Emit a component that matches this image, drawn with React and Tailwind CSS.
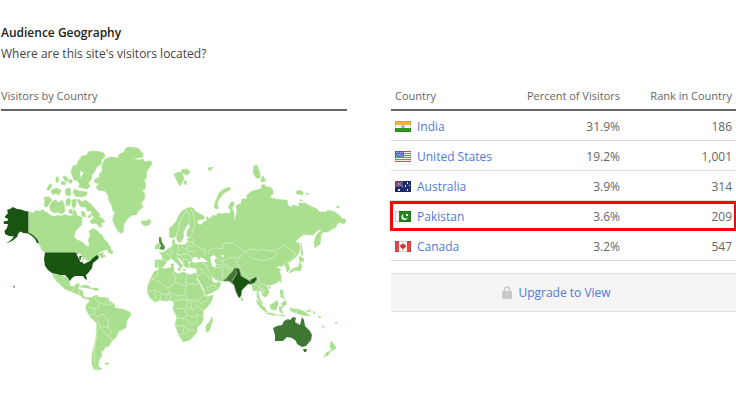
import React from "react";

const countries = [
  { code: "in", name: "India", percent: "31.9%", rank: "186" },
  { code: "us", name: "United States", percent: "19.2%", rank: "1,001" },
  { code: "au", name: "Australia", percent: "3.9%", rank: "314" },
  { code: "pk", name: "Pakistan", percent: "3.6%", rank: "209", marked: true },
  { code: "ca", name: "Canada", percent: "3.2%", rank: "547" },
];

const flags = {
  in: (
    <>
      <path fill="#f5b53d" d="M0 0h16v4H0z" />
      <path fill="#f4f4f4" d="M0 4h16v3H0z" />
      <path fill="#2f9a1f" d="M0 7h16v4H0z" />
      <circle cx="8" cy="5.5" r="1.5" fill="#8d9fd0" />
    </>
  ),
  us: (
    <>
      <path fill="#f6eeee" d="M0 0h16v11H0z" />
      <path stroke="#e0605f" d="M0 .5h16M0 2.5h16M0 4.5h16M0 6.5h16M0 8.5h16M0 10.5h16" />
      <path fill="#4a6fc4" d="M0 0h9v6H0z" />
      <path stroke="#a9bcea" strokeDasharray="1 1" d="M1 1.5h7M2 3.5h6M1 5h7" />
    </>
  ),
  au: (
    <>
      <path fill="#1c2c6c" d="M0 0h16v11H0z" />
      <path stroke="#a9a9c8" d="M0 0l8 6M8 0L0 6" />
      <path stroke="#cf6878" d="M4 0v6M0 3h8" />
      <path fill="#e8ebf8" d="M3 8h2v2H3zM12 1h1v2h-1zM10 4h1v2h-1zM14 4h1v1h-1zM12 8h1v2h-1z" />
    </>
  ),
  pk: (
    <>
      <path fill="#f5f5f5" d="M0 0h4v11H0z" />
      <path fill="#25861d" d="M4 0h12v11H4z" />
      <circle cx="9.5" cy="6" r="3" fill="#fff" />
      <circle cx="10.5" cy="5" r="2.5" fill="#25861d" />
      <path fill="#fff" d="M11 3h2v2h-2z" />
    </>
  ),
  ca: (
    <>
      <path fill="#f7f4f4" d="M0 0h16v11H0z" />
      <path fill="#dc4a48" d="M0 0h4v11H0zM12 0h4v11h-4z" />
      <path fill="#d8302f" d="M8 2l1 1.5 2 .5-.5 2L9 7.5h-.6V9h-.8V7.5H7L5.500 6 5 4l2-.5z" />
    </>
  ),
};

const Flag = ({ code }) => (
  <svg viewBox="0 0 16 11" className="h-[11px] w-4 shrink-0" aria-hidden="true">
    {flags[code]}
    <path fill="none" stroke="#000" strokeOpacity=".12" d="M.5.5h15v10H.5z" />
  </svg>
);

const WorldMap = () => (
  <svg
    viewBox="1 140 346 232"
    className="block w-full"
    role="img"
    aria-label="Visitors by Country"
  >
    <g fill="#abdf90" stroke="#abdf90" strokeWidth=".6" strokeLinejoin="round">
      {/* Canada */}
      <path d="M28.500 211.500L31 212.500L33 213L35 211L38 210.500L40 211.500L42 209.500L45 211.500L48 213L50 215L54 216.500L58 215.500L61 216L65 214.500L69 216L73 215.500L74 210L76 212L76.500 215L80 217L82 219L81.500 225L78 228L75 232L74 237L77 240L80 241L83.500 243L86 246L88 247L89.500 245L88 240L90.500 236L89 231L93 228.500L96 230L98 231.500L99.500 234L102 235L104 239L108 243L110 247L109 249L104 250.500L100 251.500L97 255L99 254L103 252L103 255L106 256L102 258L100 256L98 255L93 259L88 261L84 258L80 255L76 252.500H45L43 249L40 246L38 242L35 237L32 234.500L28.500 233Z" />
      <path d="M108 250L110 246L111 250L113 251L112 254L108 252ZM41 247L45 251L44 252L41 249Z" />
      {/* Arctic islands */}
      <path d="M79 160L82 156L87 155L88 152L93 151L98 151.500L104 153L105 157L102 159L101 164L97 167L95 171L92 175L91 180L88 183L90 186L87 189L83 188L78 187L80 184L77 181L81 177L84 173L78 169L77 164Z" />
      <path d="M73 166L77 165L80 171L80 177L78 181L74 180L72 175L71 171Z" />
      <path d="M75 189L79 191L87 192L87 195L82 197L75 196L73 192ZM63 176L67 177L68 182L64 180ZM69 179L72 180L72 183L69 183ZM56 177H58L59 180L57 183L56 181ZM47 189L49 185L52 184L51 188L48 191ZM52 190L56 188L61 190L59 195L55 193L53 195L51 192ZM66 189L70 188L71 195L67 196L65 192ZM62 181L66 183L65 185L61 184ZM44 197L49 197L52 200L49 204L47 207L44 206L45 202ZM50 205L53 201L56 200L58 203L62 200L64 204L65 211L62 214L58 212L54 213L50 210ZM66 200L69 198L71 201L69 206L66 205ZM72 200L76 199L76 205L74 209L72 206ZM69 210L72 209L73 214L69 213Z" />
      <path d="M77 200L79 199L82 202L85 200L88 202L91 204L94 208L97 211L100 214L99 217L103 219L105 222L101 223L102 227L99 227L96 223L92 224L90 221L94 218L91 214L92 211L87 211L86 207L81 207L79 204ZM81 212L84 211L86 217L82 216ZM88 217L90 214L91 218ZM80 217L82 217L82 219L80 219Z" />
      {/* Greenland, Iceland, Svalbard */}
      <path d="M119.500 154L124 152L126 148L130 147L137 148L139 149L143 154L143 157L137 158L133 159L139 160L143 159L145 162L148 161L151 161L152 164L149 168L147 171L146 178L144 181L146 184L145 189L142 190L145 194L144 200L141 203L143 207L139 210L136 215L132 215L128 218L124 224L123 232L121 233.500L118 231L115 226L112.500 219L115 212L113 211L112 206L109 201L108 195L105 191L98 190L96 187L99 184L94 182L95 179L100 177L99 174L102 172L102 165L105 159L111 157L118 158Z" />
      <path d="M141 221L144 221L147 221L149 219L151 222L149 225L145 226L142 224ZM174 174L179 172L182 173L184 179L180 186L177 181ZM181 170L187 169L190 172L188 175L182 173ZM184 181L187 181L186 185L184 183Z" />
      {/* Russian Arctic */}
      <path d="M208 168L213 167L211 170L209 171ZM254 166L257 165L260 173L260 178L256 178L253 172ZM261 179L263 176L266 181L261 182ZM214 207L216 200L219 193L224 189L230 187L230 190L224 193L219 199L217 205L219 208L216 209ZM296 192L299 190L303 192L303 195L297 194ZM305 193L309 194L308 195ZM299 200L303 200L302 201ZM336 207L339 206L339 208ZM301 243L302 249L303 256L301 254Z" />
      {/* Scandinavia and the rest of Eurasia */}
      <path d="M169.500 237L169.500 228L173 225L176 222L179 215L182 211L186 209L189 207.500L193 208L195 211L200 214L204 216L204 219L199 220L197 221L198 224L201 225L203 223L204 221L206 222L207 220L206 217L208 217L208 219L212 217L213 215L216 216L218 213L222 214L226 213L229 214L231 210L228.500 208L229 205L231 202L234 202L234 205L232 208L234 213L234 219L235 220L236 215L237 212L236 206L239 204L241 204L242 199L247 199L247 195L252 191L257 190L262 188L261 186L264 184L266 187L270 187L273 190L273 194L270 196L271 198L276 199L283 200L287 200L288 205L290 207L294 205L297 206L299 207L299 203L305 203L310 206L317 209L319 212L326 212L328 210L335 212L340 216L342 219L345 219L346 221L344 224L340 222L337 224L336 227L332 229L328 232L323 232L321 235L320 244L317 246L315 248L314 242L316 236L319 232L322 230L320 229L316 232L313 235L304 234.500L300 237L295 242L299 243L300 247L299 253L296 257L292 260L288 263L290 269L287 272L286 266L283 265L281 267L280 265L276 268L281 269L279 272L281 275L281 279L278 282L274 284L270 285L266 285L268 289L269 293L266 297L263 296L262 292L260 290L258 292L259 297L263 304L260 302L257 297L257 290L253 291L252 285L249 284L236 283L232 284L229 281L223 281L216 280L212 276L212 280L214 283L217 283L219 281L221 284L218 289L213 292L206 295L204 289L200 282L197 277L197 269L190 267L189 264L192 262L190 261L188 262L189 268L185 267L183 262L179 258L176 257L179 261L183 266L180 268L178 264L173 260L172 258L167 261L164 266L161 268L155 267L155 260L163 260L162 255L159 253L164 252L168 249L173 246L172 241L174 239L175 244L179 245L185 244L187 239L190 237L194 236L187 237L187 232L190 226L189 223L186 227L183 232L184 236L181 242L178 242L176 236L173 238Z" />
      <path d="M156 245L159 243L160 246L158 249L155 249ZM171 264L174 264L173 269L171 268ZM183 269L186 270L184 271ZM177 269L181 268L180 271Z" />
      {/* Japan, south-east Asia, Oceania */}
      <path d="M299 256L303 258L304 261L300 262ZM300 262L302 267L300 271L295 270L290 273L289 272L294 268L298 267ZM280 281L281 278L281 283ZM268 287L270 286L270 289ZM280 290L283 290L283 296L285 299L281 297ZM281 304L286 300L286 305L283 306ZM256 300L259 302L265 308L267 312L264 311L259 306ZM265 313L270 313L277 315L272 315ZM270 305L274 303L277 300L278 304L276 310L271 309ZM279 307L284 306L281 309L283 313L280 312ZM278 315L285 315L284 316ZM290 308L294 309L298 309L305 312L310 316L302 315L296 313L291 311ZM306 311L311 310L310 312ZM313 311L315 313L314 314ZM318 316L321 317L320 318ZM322 325L325 328L324 328ZM335 323L337 322L336 324ZM331 341L335 346L336 348L332 351L330 347ZM331 351L328 355L324 357L327 352ZM241 297L243 299L242 301L241 300Z" />
      {/* Africa */}
      <path d="M160 268L165 269L172 267L174 268L174 272L179 274L183 272L190 275L196 273L197 277L196 278L201 287L205 295L208 297L213 295L212 300L208 306L203 311L203 320L201 324L197 327L197 332L190 340L183 342L179 335L175 325L177 317L173 309L174 303L171 300L165 301L160 300L155 302L150 298L147.500 292L148 285L151 278L154 272Z" />
      <path d="M212 317L212.500 321L209 331L206 332L206 326L210 321Z" />
      {/* Latin America */}
      <path d="M52 273L56 275L61 275L65 277L69 279L70 286L74 287L76 284L79.500 284L78 289L83 291L83 296L86 298L89 297L92 299L91 301L88 299L83 298L80 295L75 293L70 291L65 289L61 285L56 278L54 276L59 283L58 283L54 278ZM80 287L84 285L89 286L92 289L87 288ZM92 288L97 288L99 290L94 290ZM89 281L90 283Z" />
      <path d="M92 297L97 295L98 297L108 298L109 301L114 304L115 308L122 309L130 312L131 315L127 320L126 327L124 329L119 331L116 337L111 342L109 346L105 347L104 350L101 352L102 355L99 360L98 366L102 369L98 370L94 369L92 364L92 355L94 347L96 338L97 323L90 317L86 309L86 305L89 302ZM105 363L109 363L107 365Z" />
    </g>

    {/* Inland seas */}
    <path
      fill="#fff"
      d="M192 262L193 257L197 257L199 260L201 257L203 258L208 262L200 262L195 263ZM210 257L214 255L217 258L214 260L216 264L215 268L212 266L211 261ZM221 255L224 255L223 258ZM182 243L184 239L188 240L186 244L181 245Z"
    />

    {/* Borders */}
    <g fill="none" stroke="#d9f0cd" strokeWidth=".7" strokeLinejoin="round">
      <path d="M176 237L178 230L180 222L183 215L187 210M187 210L190 217L189 223M191 209L194 216L195 224L192 234M190 236L194 240L193 244L198 247L205 250L205 256M178 245L179 251L176 254L181 255L187 252L187 246L194 246M164 253L170 255L172 258M169 249L173 252L171 255M177 256L184 254L190 255L192 260M182 247L187 250M183 259L189 260M187 252L196 251M181 257L184 262M157 261L158 267M163 260L168 261M190 238L186 239M194 242L188 242" />
      <path d="M209 254L209 250L216 248L222 249L224 243L234 243L239 248L245 251L241 256L235 258L228 258L221 262L215 256M245 251L252 249L260 251L262 249L269 251L278 249L284 245L291 250L296 254L288 262M245 251L251 258L262 261L273 258L278 253L271 251M215 264L223 265L229 270L234 268L241 268L236 262L241 256M221 262L230 267M202 263L206 265L208 270L212 276M197 268L203 270L207 276L211 279M197 276L203 273M206 288L214 285L217 288M215 268L222 267L223 280M241 270L249 279L258 277L260 284L266 285M254 284L258 285L261 289L266 291M258 286L258 293M262 287L264 294M283 265L288 262M205 265L210 266" />
      <path d="M158 269L158 274L152 279L158 281L168 288L176 282L173 272M168 288L169 295L163 294L155 290L148 292M151 278L149 284M176 282L186 286L187 273M186 284L198 284M186 286L185 295L178 296L170 292M185 295L188 300L198 301L205 294M173 302L180 299L188 300L186 307L193 310L197 305L203 311M198 301L202 304M176 308L185 309L187 315L193 317L197 314L203 317M176 318L187 319L190 324L196 324L198 320M176 326L184 325L188 330L195 330M184 325L183 334L180 335M188 330L184 334M155 291L156 300M161 294L160 300M167 294L166 300M171 294L170 300M191 301L192 309M197 314L197 319M187 315L182 319M204 295L209 299L202 303M187 336L189 337M297 309L297 314" />
      <path d="M97 295L95 299L99 302L99 307L94 309L95 314L98 317L103 314L109 322L108 328L112 332L108 337L115 340M99 302L105 305L107 298M105 305L112 305L112 301M98 320L100 327L108 327M98 328L96 340L94 353L95 365M108 335L105 334L100 327M94 309L88 307M94 314L89 315M72 291L75 287M78 290L80 294M97 367L97 370M109 304L110 301" />
    </g>

    {/* Countries with measured traffic */}
    <g stroke="#8f9c8a" strokeWidth=".6" strokeLinejoin="round">
      <g fill="#195411">
        <path d="M28.500 211.500L25 211L21 209.500L17 209L13 207L10 209L7 210L8 213L4.500 217L8 219L8 220.500L3.500 221.500L4 224L8 224L7 228L4.500 231L5 234L9 236L14 236.500L11 240L6 243.500L12 241L17 237L18.500 233L21 231.500L23 233L28 233.500L32 236L35 239L37 243L39 243L37 239L33 235L28.500 232.500Z" stroke="none" />
        <path d="M45 252.500H75L80 254.500L78 257L81 256L84 258L82 262L84 264L90 261L93 258L97 255L99 257L98 259L93 263L92 268L89 272L86 275L87 280L85 279L83 276L75 276L72 278L70 281L68 278L65 275L60 275L52 273L48 270L45 266L44 259Z" stroke="none" />
        <path d="M234 268L239 268.500L240 272L241 276L248 280L251 282L250 280L256 277L257 279L254 283L250 284L248 284L242 290L241 296L239 298L236 292L234 285L231 282L233 280L237 273Z" />
        <path d="M13 285L15 287L14 288Z" stroke="none" />
      </g>
      <path d="M28.500 212V232.500" stroke="#9bb592" strokeWidth="1" />
      <path fill="#fff" stroke="none" d="M76 254L80 253L81 256L79 256L80 262L81 257L84 257L82 262L80 262L79 259L77 255ZM83 263L88 260L85 263Z" />
      <path fill="#3f7833" d="M223 280L226 279L229 275L233 271L234 268L237 272L235 276L232 280L232 283L229 281L224 281Z" />
      <g fill="#3f7833" stroke="none">
        <path d="M273 328L277 326L282 325L284 321L288 319L290 320L293 317L296 318L295 322L300 325L302 317L304 320L305 326L310 331L312 335L311 340L306 346L302 347L297 344L296 341L292 338L287 337L283 341L275 341L275 335Z" />
        <path d="M303 349L307 349L306 352L304 352Z" />
      </g>
      <path fill="#599047" d="M159 237L161 237L162 242L165 247L164 250L159 249L161 246L159 242Z" stroke="none" />
    </g>
  </svg>
);

const Lock = () => (
  <svg viewBox="0 0 10 13" className="h-[13px] w-[10px]" aria-hidden="true">
    <rect y="5" width="10" height="8" rx="1" fill="#c9c9c9" />
    <path d="M2.500 6V3.500a2.500 2.500 0 0 1 5 0V6" fill="none" stroke="#c9c9c9" strokeWidth="1.500" />
  </svg>
);

const App = () => {
  return (
    <main className="overflow-x-hidden bg-white pt-[22px] pl-px font-['Open_Sans',sans-serif] text-[#666]">
      <h1 className="text-[12px] leading-[21px] font-semibold text-[#222]">Audience Geography</h1>
      <p className="text-[12px] leading-[21px] text-[#444]">Where are this site's visitors located?</p>
      <div className="mt-[19px] grid grid-cols-[346fr_345fr] gap-11">
        <section>
          <h2 className="h-7 border-b-2 border-[#666] text-[11px] leading-[26px]">
            Visitors by Country
          </h2>
          <div className="mt-[29px]">
            <WorldMap />
          </div>
        </section>
        <section>
          <table className="w-full border-separate border-spacing-0 text-[12px]">
            <thead>
              <tr className="text-[11px] leading-[26px]">
                <th className="h-7 border-b-2 border-[#666] py-0 pl-1 text-left font-normal">Country</th>
                <th className="h-7 border-b-2 border-[#666] p-0 text-right font-normal">Percent of Visitors</th>
                <th className="h-7 w-29 border-b-2 border-[#666] py-0 pr-1 text-right font-normal">Rank in Country</th>
              </tr>
            </thead>
            <tbody>
              {countries.map((country) => (
                <tr key={country.code} className="relative leading-[27px]">
                  <td className="border-b border-[#dcdcdc] pt-[2px] pb-0 pl-1">
                    <a href="#" className="flex items-center gap-[6px] text-[#5079dc]">
                      <Flag code={country.code} />
                      {country.name}
                    </a>
                    {country.marked && (
                      <span className="absolute inset-y-0 -right-px -left-px border-3 border-[#f00]"></span>
                    )}
                  </td>
                  <td className="border-b border-[#dcdcdc] pt-[2px] text-right">{country.percent}</td>
                  <td className="border-b border-[#dcdcdc] pt-[2px] pr-1 text-right">{country.rank}</td>
                </tr>
              ))}
            </tbody>
          </table>
          <div className="mt-3 flex h-[39px] items-center justify-center border-y border-[#e2e2e2] bg-[#f5f5f5] pr-3.5">
            <a href="#" className="flex items-center gap-[6px] text-[12px] text-[#5079dc]">
              <Lock />
              Upgrade to View
            </a>
          </div>
        </section>
      </div>
    </main>
  );
};

export default App;
